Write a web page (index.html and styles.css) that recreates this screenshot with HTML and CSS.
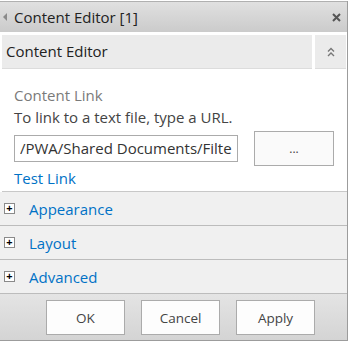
FILE: index.html
```html
<!DOCTYPE html>
<html lang="en">
<head>
  <meta charset="UTF-8">
  <title>Content Editor tool pane</title>
  <link rel="stylesheet" href="styles.css">
</head>
<body>
  <div class="tool-pane">

    <!-- pane title bar -->
    <div class="pane-title">
      <span class="back-arrow"></span>
      <span class="title-text">Content Editor [1]</span>
      <svg class="close-icon" width="9" height="9" viewBox="0 0 9 9">
        <path d="M1 1 L8 8 M8 1 L1 8" stroke="#555" stroke-width="2" fill="none"/>
      </svg>
    </div>

    <!-- web part header -->
    <div class="part-head">
      <div class="part-name">Content Editor</div>
      <div class="part-toggle">
        <svg width="8" height="10" viewBox="0 0 8 10">
          <path d="M1 4.5 L4 1.5 L7 4.5 M1 9 L4 6 L7 9" stroke="#777" stroke-width="1.4" fill="none"/>
        </svg>
      </div>
    </div>

    <!-- content link -->
    <div class="part-body">
      <div class="field-label">Content Link</div>
      <div class="field-desc">To link to a text file, type a URL.</div>
      <div class="link-row">
        <div class="link-input"><span class="link-value">/PWA/Shared Documents/FilterLists.html</span></div>
        <button class="browse-btn">...</button>
      </div>
      <a class="test-link" href="#">Test Link</a>
    </div>

    <!-- collapsed sections -->
    <div class="section">
      <span class="expander">+</span>
      <a class="section-link" href="#">Appearance</a>
    </div>
    <div class="section">
      <span class="expander">+</span>
      <a class="section-link" href="#">Layout</a>
    </div>
    <div class="section">
      <span class="expander">+</span>
      <a class="section-link" href="#">Advanced</a>
    </div>

    <!-- footer buttons -->
    <div class="pane-footer">
      <button class="pane-btn">OK</button>
      <button class="pane-btn">Cancel</button>
      <button class="pane-btn">Apply</button>
    </div>

  </div>
</body>
</html>
```

FILE: styles.css
```css
html, body {
  margin: 0;
  padding: 0;
  background: #fff;
}

.tool-pane {
  width: 347px;
  margin-top: 1px;
  border-right: 1px solid #9c9c9c;
  font-family: "Open Sans", "Noto Sans", sans-serif;
  color: #222;
}

/* title bar */
.pane-title {
  height: 30px;
  border-top: 1px solid #b0b0b0;
  background: linear-gradient(#e0e0e0, #cbcbcb);
  display: flex;
  align-items: center;
  padding: 0 6px 0 3px;
}
.back-arrow {
  width: 0;
  height: 0;
  border-top: 4px solid transparent;
  border-bottom: 4px solid transparent;
  border-right: 4px solid #8a8a8a;
  margin-right: 7px;
}
.title-text {
  flex: 1;
  font-size: 15px;
}

/* web part header */
.part-head {
  display: flex;
  gap: 3px;
  margin-top: 3px;
  padding: 0 1px 0 2px;
}
.part-name {
  flex: 1;
  height: 33px;
  line-height: 33px;
  padding-left: 4px;
  background: #ebebeb;
  border-bottom: 1px solid #dcdcdc;
  font-size: 15px;
}
.part-toggle {
  width: 31px;
  height: 33px;
  background: #ebebeb;
  border-bottom: 1px solid #dcdcdc;
  display: flex;
  align-items: center;
  justify-content: center;
}

/* content link */
.part-body {
  margin: 0 0 0 2px;
  padding: 15px 0 2px 12px;
  border-bottom: 1px solid #c8c8c8;
  font-size: 15px;
  line-height: 22px;
}
.field-label {
  color: #7a7a7a;
}
.field-desc {
  color: #444;
}
.link-row {
  display: flex;
  align-items: center;
  margin-top: 3px;
}
.link-input {
  width: 212px;
  height: 25px;
  padding: 0 5px;
  border: 1px solid #ababab;
  background: #fff;
}
.link-value {
  display: block;
  overflow: hidden;
  white-space: nowrap;
  line-height: 25px;
  color: #333;
  font-size: 15px;
}
.browse-btn {
  width: 80px;
  height: 35px;
  margin-left: 16px;
  background: #fafafa;
  border: 1px solid #ababab;
  color: #444;
  font-family: inherit;
  font-size: 12px;
}
.test-link {
  display: block;
  margin-top: 1px;
  color: #0072c6;
  text-decoration: none;
}

/* collapsed sections */
.section {
  height: 33px;
  display: flex;
  align-items: center;
  background: #f0f0f0;
  border-bottom: 1px solid #bcbcbc;
}
.expander {
  width: 9px;
  height: 9px;
  margin: 0 14px 0 4px;
  border: 1px solid #8a8a8a;
  background: #fff;
  font-size: 11px;
  line-height: 8px;
  text-align: center;
  font-weight: bold;
  color: #000;
}
.section-link {
  color: #0072c6;
  text-decoration: none;
  font-size: 15px;
}

/* footer */
.pane-footer {
  display: flex;
  justify-content: flex-end;
  gap: 16px;
  padding: 6px 32px 5px 0;
  background: linear-gradient(#e4e4e4, #d4d4d4);
  border-bottom: 1px solid #9c9c9c;
}
.pane-btn {
  width: 79px;
  height: 35px;
  background: #fdfdfd;
  border: 1px solid #ababab;
  color: #444;
  font-family: inherit;
  font-size: 13.5px;
}
```
